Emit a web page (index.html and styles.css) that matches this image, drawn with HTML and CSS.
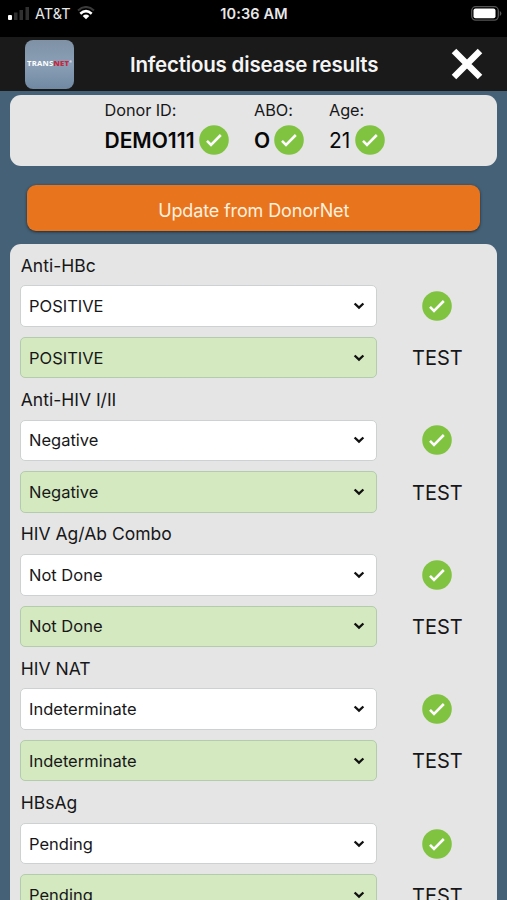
FILE: index.html
```html
<!DOCTYPE html>
<html lang="en">
<head>
<meta charset="utf-8">
<title>Infectious disease results</title>
<link rel="stylesheet" href="styles.css">
</head>
<body>
<svg class="defs" aria-hidden="true">
  <symbol id="check" viewBox="0 0 30 30"><circle cx="15" cy="15" r="14.8" fill="#80c341"/><path d="M8 15.800l4 4L21.800 10" fill="none" stroke="#fff" stroke-width="2.600"/></symbol>
  <symbol id="chevron" viewBox="0 0 12 8"><path d="M1.600 1.500L6 5.600l4.400-4.100" fill="none" stroke="#111" stroke-width="2.300"/></symbol>
</svg>
<div class="status">
  <div class="carrier">
    <svg class="signal" viewBox="0 0 22 14"><rect x="0" y="9" width="4" height="5" rx="1" fill="#fff"/><path d="M6 6.500h3.500V14H6zM11.500 4H15v10h-3.500zM17.500 1H21v13h-3.500z" fill="#303030"/></svg>
    <span class="network">AT&amp;T</span>
    <svg class="wifi" viewBox="0 0 18 14"><path d="M1 4.500Q9-2.500 17 4.500" fill="none" stroke="#3a3a3a" stroke-width="2"/><path d="M3.300 7.700Q9 2.700 14.700 7.700" fill="none" stroke="#fff" stroke-width="2.600"/><path d="M5.700 10Q9 7.200 12.300 10L9 13.300z" fill="#fff"/></svg>
  </div>
  <span class="clock">10:36 AM</span>
  <svg class="battery" viewBox="0 0 31 15"><rect x=".7" y=".7" width="26.600" height="13.400" rx="4" fill="none" stroke="#555" stroke-width="1.300"/><rect x="2.500" y="2.500" width="22" height="9.800" rx="2" fill="#fff"/><path d="M28.800 5v5q1.600-.6 1.600-2.500T28.800 5z" fill="#555"/></svg>
</div>
<header class="header">
  <div class="logo"><span>TRANS<b>NET</b><i>®</i></span></div>
  <h1 class="title">Infectious disease results</h1>
  <svg class="close" viewBox="0 0 32 32"><path d="M3 3l26 26M29 3L3 29" stroke="#fff" stroke-width="6.400"/></svg>
</header>
<main>
  <section class="card donor">
    <div class="field id"><span class="name">Donor ID:</span><div class="value"><strong>DEMO111</strong><svg class="check"><use href="#check"/></svg></div></div>
    <div class="field abo"><span class="name">ABO:</span><div class="value"><strong>O</strong><svg class="check"><use href="#check"/></svg></div></div>
    <div class="field age"><span class="name">Age:</span><div class="value"><span class="years">21</span><svg class="check"><use href="#check"/></svg></div></div>
  </section>
  <button class="update"><span>Update from DonorNet</span></button>
  <section class="card results">
    <div class="group">
      <h2 class="label">Anti-HBc</h2>
      <div class="select"><span>POSITIVE</span><svg class="chevron"><use href="#chevron"/></svg></div><svg class="check"><use href="#check"/></svg>
      <div class="select confirmed"><span>POSITIVE</span><svg class="chevron"><use href="#chevron"/></svg></div><span class="test">TEST</span>
    </div>
    <div class="group">
      <h2 class="label">Anti-HIV I/II</h2>
      <div class="select"><span>Negative</span><svg class="chevron"><use href="#chevron"/></svg></div><svg class="check"><use href="#check"/></svg>
      <div class="select confirmed"><span>Negative</span><svg class="chevron"><use href="#chevron"/></svg></div><span class="test">TEST</span>
    </div>
    <div class="group">
      <h2 class="label">HIV Ag/Ab Combo</h2>
      <div class="select"><span>Not Done</span><svg class="chevron"><use href="#chevron"/></svg></div><svg class="check"><use href="#check"/></svg>
      <div class="select confirmed"><span>Not Done</span><svg class="chevron"><use href="#chevron"/></svg></div><span class="test">TEST</span>
    </div>
    <div class="group">
      <h2 class="label">HIV NAT</h2>
      <div class="select"><span>Indeterminate</span><svg class="chevron"><use href="#chevron"/></svg></div><svg class="check"><use href="#check"/></svg>
      <div class="select confirmed"><span>Indeterminate</span><svg class="chevron"><use href="#chevron"/></svg></div><span class="test">TEST</span>
    </div>
    <div class="group">
      <h2 class="label">HBsAg</h2>
      <div class="select"><span>Pending</span><svg class="chevron"><use href="#chevron"/></svg></div><svg class="check"><use href="#check"/></svg>
      <div class="select confirmed"><span>Pending</span><svg class="chevron"><use href="#chevron"/></svg></div><span class="test">TEST</span>
    </div>
  </section>
</main>
</body>
</html>
```
FILE: styles.css
```css
* { box-sizing: border-box; }
body { margin: 0; height: 900px; overflow: hidden; background: #446177; color: #171719; font-family: Inter, "Liberation Sans", sans-serif; }
svg { display: block; flex: none; }
.defs { display: none; }
.status { height: 37px; padding: 0 7px 10px 8px; background: #000; color: #e8e8e8; display: grid; grid-template-columns: 1fr auto 1fr; align-items: center; }
.carrier { display: flex; align-items: center; }
.signal { width: 22px; height: 14px; margin-top: -1px; }
.network { font-size: 14.5px; margin-left: 5px; width: 36px; white-space: nowrap; }
.wifi { width: 18px; height: 14px; margin-left: 6px; margin-top: -1px; }
.clock { font-size: 14.5px; font-weight: 600; letter-spacing: .15px; }
.battery { width: 31px; height: 15px; justify-self: end; margin-right: -2px; margin-top: -1px; }
.header { height: 54px; padding: 0 23px 0 25px; background: #1a1a1a; display: grid; grid-template-columns: 50px 1fr 33px; align-items: center; }
.logo { width: 49px; height: 49px; padding-bottom: 2px; border-radius: 8px; background: linear-gradient(#7e91a5, #8a9fb6 50%, #7089a2); display: flex; align-items: center; justify-content: center; color: #fff; font: 700 7.7px "Open Sans", sans-serif; letter-spacing: .2px; white-space: nowrap; }
.logo b { color: #c6283f; font-weight: 800; }
.logo i { font-size: 3px; vertical-align: 3px; }
.title { margin: 1px 0 0 55px; color: #f5f5f5; font-size: 20.5px; font-weight: 600; line-height: 26px; letter-spacing: -.2px; white-space: nowrap; }
.close { width: 32px; height: 32px; }
main { padding: 4px 9.6px 0 10.4px; }
.card { background: #e5e5e5; border-radius: 11px; }
.donor { height: 70.5px; padding: 5px 0 0 94.1px; display: flex; }
.id { width: 149.5px; }
.abo { width: 75px; }
.name { display: block; font-size: 16.3px; line-height: 21px; letter-spacing: -.05px; white-space: nowrap; }
.value { display: flex; align-items: center; height: 38px; color: #080808; font-size: 21px; }
.value strong { font-weight: 600; }
.check { width: 30px; height: 30px; }
.value .check { margin-left: auto; }
.id .value { width: 125px; }
.abo .value { width: 50.5px; }
.age .value { width: 56px; }
.update { display: flex; align-items: center; justify-content: center; width: 452.500px; height: 45.500px; margin: 19.500px 0 13.500px 17.1px; padding: 5px 0 0; border: 0; border-radius: 9px; background: #e8751e; box-shadow: 0 1px 3px #202c35; color: #fff0df; font: 18px Inter, sans-serif; letter-spacing: -.14px; }
.group { display: grid; grid-template-columns: 357px 120px; grid-template-rows: 41.400px 41.400px 10.200px 41.400px; padding-left: 10px; align-items: center; justify-items: center; }
.label { grid-column: 1 / 3; justify-self: start; margin: 2px 0 0 .4px; font-size: 17.500px; font-weight: 400; line-height: 22px; }
.select { grid-column: 1; grid-row: 2; width: 100%; height: 41.400px; padding: 0 11.5px 0 7.6px; border: 1px solid #ced1d1; border-radius: 5px; background: #fff; display: flex; align-items: center; justify-content: space-between; font-size: 16.500px; }
.confirmed { grid-row: 4; background: #d4e9bf; border-color: #b3ccae; }
.chevron { width: 12px; height: 8px; }
.test { grid-column: 2; grid-row: 4; margin-top: 1px; font-size: 20px; }
```
